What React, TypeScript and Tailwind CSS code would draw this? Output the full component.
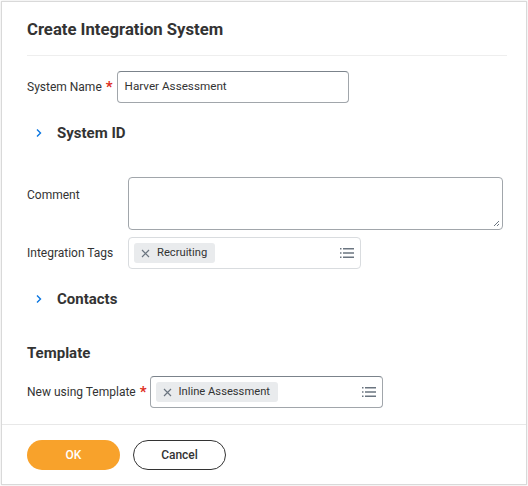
import React from "react";

const ListIcon = () => (
  <svg width="14" height="12" viewBox="0 0 14 12" fill="none">
    <rect x="0" y="1" width="1.5" height="1.5" fill="#6b7580" />
    <rect x="0" y="5.25" width="1.5" height="1.5" fill="#6b7580" />
    <rect x="0" y="9.5" width="1.5" height="1.5" fill="#6b7580" />
    <rect x="3" y="1" width="11" height="1.5" fill="#6b7580" />
    <rect x="3" y="5.25" width="11" height="1.5" fill="#6b7580" />
    <rect x="3" y="9.5" width="11" height="1.5" fill="#6b7580" />
  </svg>
);

const Chevron = () => (
  <svg width="8" height="12" viewBox="0 0 8 12" fill="none">
    <path d="M2 2.5 L5.5 6 L2 9.5" stroke="#0875e1" strokeWidth="1.4" fill="none" />
  </svg>
);

const XIcon = () => (
  <svg width="9" height="9" viewBox="0 0 9 9" fill="none">
    <path d="M1 1 L8 8 M8 1 L1 8" stroke="#6b7580" strokeWidth="1.2" />
  </svg>
);

const Tag = ({ label }: { label: string }) => (
  <div className="flex items-center h-[20px] bg-[#e9ebed] rounded-[3px] pl-[7px] pr-[8px] gap-[7px]">
    <XIcon />
    <span className="text-[11.2px] text-[#333333] leading-none">{label}</span>
  </div>
);

const Req = () => <span className="text-[#de2e21] text-[15px] font-bold leading-none mt-[2px]">*</span>;

export default function App() {
  return (
    <div className="w-[528px] h-[486px] bg-white p-px" style={{ fontFamily: "Roboto, 'Liberation Sans', sans-serif" }}>
      <div className="w-[526px] h-[484px] border border-[#d9d9d9] shadow-[0_0_2px_rgba(0,0,0,0.12)] flex flex-col">
        <div className="pl-[25px] pt-[16px] h-[53px]">
          <h1 className="text-[16.7px] leading-[24px] font-bold text-[#333333]">Create Integration System</h1>
        </div>
        <div className="ml-[25px] mr-[19px] h-px bg-[#eeeeee]" />

        <div className="pl-[25px] pt-[15px] flex-1 text-[#333333]">
          <div className="flex items-center h-[32px]">
            <span className="text-[12px]">System Name</span>
            <span className="ml-[4px]"><Req /></span>
            <div className="ml-[4px] w-[232px] h-[32px] border border-[#a1a6ab] border-t-[#7b838b] rounded-[4px] flex items-center pl-[7px] text-[11.7px]">
              Harver Assessment
            </div>
          </div>

          <div className="flex items-center h-[20px] mt-[20px] pl-[8px]">
            <Chevron />
            <span className="ml-[14px] text-[15px] font-bold">System ID</span>
          </div>

          <div className="flex mt-[34px]">
            <span className="text-[12px] w-[101px] pt-[9px]">Comment</span>
            <div className="relative w-[375px] h-[53px] border border-[#a1a6ab] rounded-[4px]">
              <svg className="absolute right-[2px] bottom-[2px]" width="7" height="7" viewBox="0 0 7 7">
                <path d="M6 1 L1 6 M6 4 L4 6" stroke="#6b7580" strokeWidth="1" />
              </svg>
            </div>
          </div>

          <div className="flex items-center mt-[7px]">
            <span className="text-[12px] w-[101px]">Integration Tags</span>
            <div className="w-[233px] h-[32px] border border-[#d9dcdf] rounded-[4px] flex items-center pl-[5px] pr-[6px] justify-between">
              <Tag label="Recruiting" />
              <ListIcon />
            </div>
          </div>

          <div className="flex items-center h-[20px] mt-[20px] pl-[8px]">
            <Chevron />
            <span className="ml-[14px] text-[15px] font-bold">Contacts</span>
          </div>

          <div className="mt-[34px] h-[20px] flex items-center">
            <span className="text-[15px] font-bold">Template</span>
          </div>

          <div className="flex items-center h-[32px] mt-[13px]">
            <span className="text-[12px]">New using Template</span>
            <span className="ml-[4px]"><Req /></span>
            <div className="ml-[3px] w-[233px] h-[32px] border border-[#a1a6ab] border-t-[#7b838b] rounded-[4px] flex items-center pl-[5px] pr-[6px] justify-between">
              <Tag label="Inline Assessment" />
              <ListIcon />
            </div>
          </div>
        </div>

        <div className="h-px bg-[#e8e8e8]" />
        <div className="h-[59px] pl-[25px] pt-[15px] flex gap-[13px]">
          <button className="w-[93px] h-[30px] rounded-full bg-[#f8a22b] text-white text-[12px] font-medium">OK</button>
          <button className="w-[93px] h-[30px] rounded-full border border-[#333333] text-[#333333] text-[12px] font-medium">Cancel</button>
        </div>
      </div>
    </div>
  );
}
